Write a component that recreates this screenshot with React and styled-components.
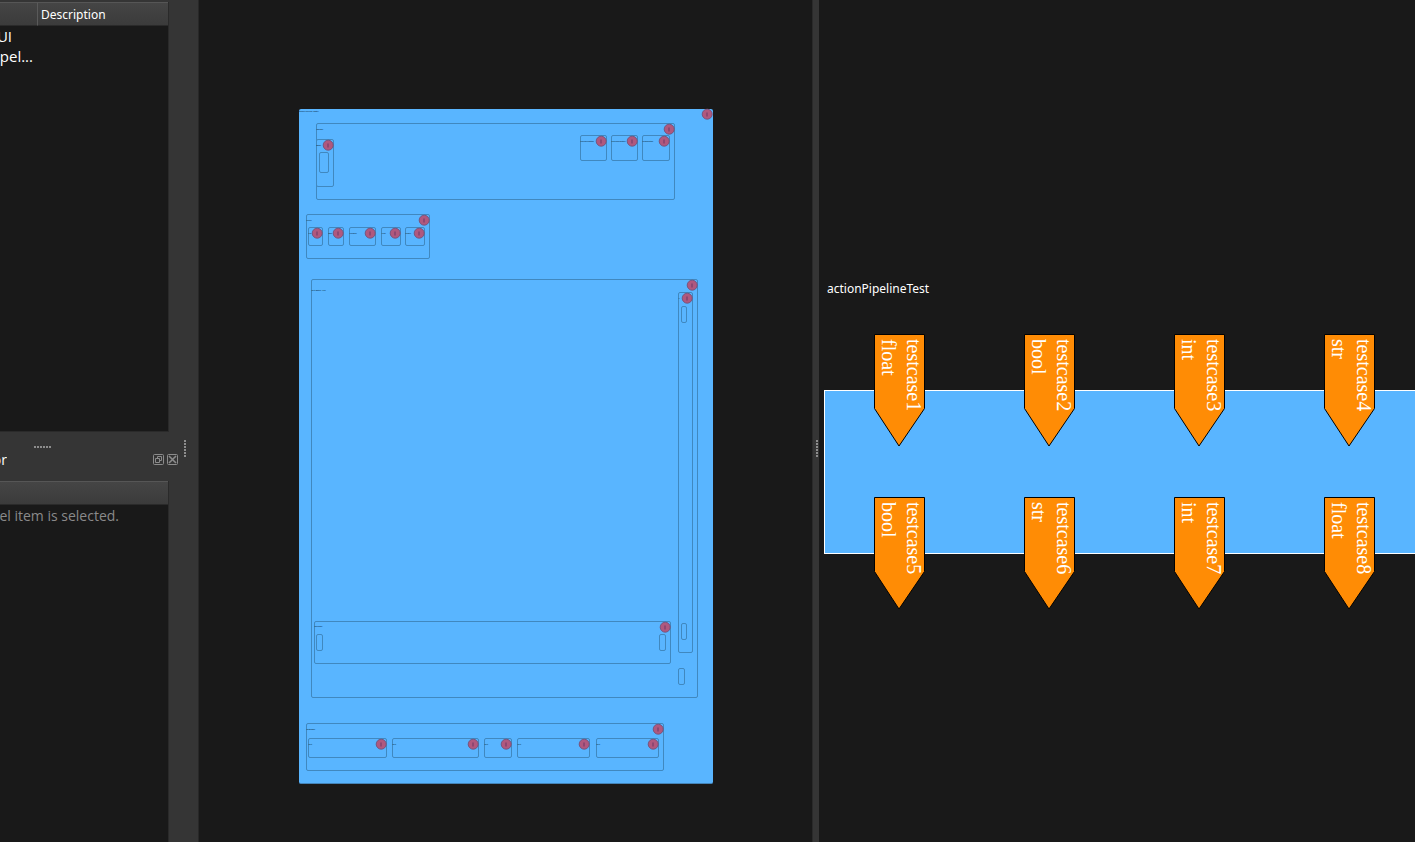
import React from "react";
import styled, { createGlobalStyle } from "styled-components";

const GlobalStyle = createGlobalStyle`
  *, *::before, *::after { box-sizing: border-box; }
  body {
    margin: 0;
    background: #191919;
    color: #fff;
    font-family: "Noto Sans", "Open Sans", sans-serif;
    font-size: 12px;
  }
`;

const Window = styled.div`
  display: grid;
  grid-template-columns: 182px 17px minmax(0, 613fr) 7px minmax(0, 596fr);
  height: 100vh;
  overflow: hidden;
`;

const Dock = styled.aside`
  display: flex;
  flex-direction: column;
  background: #353535;
`;

const DockPanel = styled.section`
  flex: ${(p) => p.$grow} 1 0;
  min-height: 0;
  display: flex;
  flex-direction: column;
  padding-top: ${(p) => p.$top || 0}px;
`;

const TreeArea = styled.div`
  flex: 1;
  margin-right: 13px;
  overflow: hidden;
  background: #191919;
  border-right: 1px solid #2a2a2a;
  border-bottom: ${(p) => (p.$closed ? "1px solid #2a2a2a" : "none")};
`;

const Tree = styled.table`
  width: 100%;
  table-layout: fixed;
  border-collapse: separate;
  border-spacing: 0;
`;

const HeadCell = styled.th`
  width: ${(p) => (p.$width ? `${p.$width}px` : "auto")};
  height: 24px;
  padding: 1px 3px 0;
  text-align: left;
  font-weight: 400;
  line-height: 20px;
  border-top: 1px solid #565656;
  border-bottom: 1px solid #2a2a2a;
  border-right: ${(p) => (p.$divided ? "1px solid #5a5a5a" : "none")};
  background: linear-gradient(#454545, #3b3b3b);
`;

const Cell = styled.td`
  height: 20px;
  padding: 0;
  line-height: 20px;
  color: ${(p) => (p.$muted ? "#8a8a8a" : "#fff")};
`;

const Clipped = styled.div`
  display: flex;
  justify-content: flex-end;
  width: ${(p) => p.$width}px;
  overflow: hidden;
  white-space: nowrap;
  font-family: "Open Sans", "Noto Sans", sans-serif;
  font-size: ${(p) => p.$size || 15}px;
  line-height: ${(p) => p.$line || 20}px;
`;

const GripRow = styled.div`
  display: flex;
  height: 16px;
  align-items: flex-end;
  padding-left: 34px;
`;

const Grip = styled.div`
  display: flex;
  flex-direction: ${(p) => (p.$vertical ? "column" : "row")};
  gap: 1px;
`;

const GripDot = styled.span`
  width: 2px;
  height: 2px;
  background: #8d8d8d;
`;

const TitleBar = styled.header`
  display: flex;
  justify-content: space-between;
  align-items: center;
  height: 24px;
  margin-bottom: 9px;
  padding-right: 3px;
`;

const TitleButtons = styled.div`
  display: flex;
  gap: 2px;
`;

const IconButton = styled.button`
  display: flex;
  width: 12px;
  height: 12px;
  padding: 0;
  border: 0;
  background: none;
`;

const Splitter = styled.div`
  display: flex;
  align-items: center;
  padding: 55px 0 0 ${(p) => p.$inset}px;
  background: #353535;
  border-left: ${(p) => (p.$edge === "left" ? "1px solid #2a2a2a" : "none")};
  border-right: ${(p) => (p.$edge === "left" ? "none" : "1px solid #282828")};
`;

const ModelView = styled.main`
  display: flex;
  align-items: center;
  justify-content: center;
  padding-top: 50px;
  overflow: hidden;
`;

const Model = styled.div`
  position: relative;
  flex: none;
  width: 414px;
  height: 675px;
  background: #59b5ff;
  border-bottom: 1px solid #4484b8;
  border-radius: 2px;
`;

const Node = styled.div`
  position: absolute;
  left: ${(p) => p.$box[0] - 299}px;
  top: ${(p) => p.$box[1] - 109}px;
  width: ${(p) => p.$box[2] - p.$box[0]}px;
  height: ${(p) => p.$box[3] - p.$box[1]}px;
  border: 1px solid #4088bf;
  border-radius: 2px;
`;

const NodeLabel = styled.span`
  position: absolute;
  left: 0;
  top: ${(p) => p.$top}px;
  font-family: "Liberation Sans", sans-serif;
  font-size: 2px;
  line-height: 3px;
  white-space: nowrap;
  color: #001428;
`;

const BadgeIcon = styled.svg`
  position: absolute;
  top: 0;
  right: ${(p) => p.$inset}px;
  width: 11px;
  height: 11px;
  overflow: visible;
`;

const PipelineView = styled.section`
  display: flex;
  flex-direction: column;
  justify-content: center;
  padding: 0 0 9px 5px;
  overflow: hidden;
`;

const PipelineTitle = styled.h1`
  margin: 0 0 92px 3px;
  padding-top: 1px;
  font-size: 12px;
  line-height: 18px;
  font-weight: 400;
`;

const Pipeline = styled.div`
  position: relative;
  height: 164px;
  background: #59b5ff;
  border: 1px solid #fff;
  border-right: 0;
`;

const PortRow = styled.div`
  position: absolute;
  left: 49px;
  top: ${(p) => p.$top}px;
  display: flex;
  gap: 99px;
`;

const Port = styled.div`
  position: relative;
  flex: none;
  width: 51px;
  height: 113px;
`;

const PortShape = styled.svg`
  display: block;
`;

const PortText = styled.div`
  position: absolute;
  top: 5px;
  right: -1px;
  writing-mode: vertical-rl;
  font-family: "Liberation Serif", serif;
  font-size: 20px;
  line-height: 25px;
  white-space: nowrap;
`;

const groups = [
  { box: [316, 123, 675, 200], label: "Toolbar", badge: true },
  { box: [316, 139, 334, 187], label: "Base", badge: true },
  { box: [319, 152, 329, 173] },
  { box: [580, 135, 607, 161], label: "Minimizebutton", badge: true },
  { box: [611, 135, 638, 161], label: "Maximizebutton", badge: true },
  { box: [642, 135, 670, 161], label: "Closebutton", badge: true },
  { box: [306, 214, 430, 259], label: "Menu", badge: true },
  { box: [308, 227, 323, 246], label: "File", badge: true },
  { box: [328, 227, 344, 246], label: "Edit", badge: true },
  { box: [349, 227, 376, 246], label: "Window", badge: true },
  { box: [381, 227, 401, 246], label: "View", badge: true },
  { box: [405, 227, 425, 246], label: "Model", badge: true },
  { box: [311, 279, 698, 698], label: "Text Editor Area", top: 9, badge: true },
  { box: [678, 292, 693, 653], label: "V", badge: true },
  { box: [681, 306, 687, 323] },
  { box: [681, 623, 687, 640] },
  { box: [678, 668, 685, 685] },
  { box: [314, 621, 671, 664], label: "Scrollbar", top: 3, badge: true },
  { box: [316, 634, 323, 651] },
  { box: [659, 634, 666, 651] },
  { box: [306, 723, 664, 771], label: "Statusbar", badge: true },
  { box: [308, 738, 387, 758], label: "Text", badge: true },
  { box: [392, 738, 479, 758], label: "Text", badge: true },
  { box: [484, 738, 512, 758], label: "Text", badge: true },
  { box: [517, 738, 590, 758], label: "Text", badge: true },
  { box: [596, 738, 659, 758], label: "Text", badge: true },
];

const inputs = [
  ["testcase1", "float"],
  ["testcase2", "bool"],
  ["testcase3", "int"],
  ["testcase4", "str"],
];

const outputs = [
  ["testcase5", "bool"],
  ["testcase6", "str"],
  ["testcase7", "int"],
  ["testcase8", "float"],
];

function GripDots({ vertical }) {
  return (
    <Grip $vertical={vertical}>
      {[0, 1, 2, 3, 4, 5].map((i) => (
        <GripDot key={i} />
      ))}
    </Grip>
  );
}

function Badge({ inset = 0 }) {
  return (
    <BadgeIcon $inset={inset} viewBox="0 0 11 11" aria-hidden="true">
      <circle cx="5.2" cy="5.2" r="5" fill="#b0587e" stroke="#735078" strokeWidth="0.9" />
      <path d="M4.5 3.5v4M5.5 3.5v4" stroke="#8a4570" strokeWidth="0.9" />
    </BadgeIcon>
  );
}

function Ports({ items, top }) {
  return (
    <PortRow $top={top}>
      {items.map(([name, type]) => (
        <Port key={name}>
          <PortShape width="51" height="113" viewBox="0 0 51 113" aria-hidden="true">
            <path d="M.5 .5H50.5V74.5L25 112L.5 74.5Z" fill="#ff8c05" stroke="#000" />
          </PortShape>
          <PortText>
            <div>{name}</div>
            <div>{type}</div>
          </PortText>
        </Port>
      ))}
    </PortRow>
  );
}

function FloatIcon() {
  return (
    <svg width="12" height="12" viewBox="0 0 12 12" fill="none" stroke="#8c8c8c" aria-hidden="true">
      <rect x=".5" y=".5" width="10" height="10" rx="1" />
      <path d="M4.5 4.5V2.5H8.5V6.5H6.5M2.5 4.5H6.5V8.5H2.5Z" />
    </svg>
  );
}

function CloseIcon() {
  return (
    <svg width="12" height="12" viewBox="0 0 12 12" fill="none" stroke="#8c8c8c" aria-hidden="true">
      <rect x=".5" y=".5" width="10" height="10" rx="1" />
      <path d="M2 2L9 9M9 2L2 9" strokeWidth="1.6" />
    </svg>
  );
}

export default function App() {
  return (
    <>
      <GlobalStyle />
      <Window>
        <Dock>
          <DockPanel $grow={430} $top={2}>
            <TreeArea $closed>
              <Tree>
                <thead>
                  <tr>
                    <HeadCell $width={38} $divided />
                    <HeadCell>Description</HeadCell>
                  </tr>
                </thead>
                <tbody>
                  <tr>
                    <Cell colSpan={2}>
                      <Clipped $width={12}>UI</Clipped>
                    </Cell>
                  </tr>
                  <tr>
                    <Cell colSpan={2}>
                      <Clipped $width={33}>pel...</Clipped>
                    </Cell>
                  </tr>
                </tbody>
              </Tree>
            </TreeArea>
          </DockPanel>
          <DockPanel $grow={410}>
            <GripRow>
              <GripDots />
            </GripRow>
            <TitleBar>
              <Clipped $width={7} $size={14} $line={24}>or</Clipped>
              <TitleButtons>
                <IconButton aria-label="Float">
                  <FloatIcon />
                </IconButton>
                <IconButton aria-label="Close">
                  <CloseIcon />
                </IconButton>
              </TitleButtons>
            </TitleBar>
            <TreeArea>
              <Tree>
                <thead>
                  <tr>
                    <HeadCell />
                  </tr>
                </thead>
                <tbody>
                  <tr>
                    <Cell $muted>
                      <Clipped $width={119} $size={14} $line={22}>el item is selected.</Clipped>
                    </Cell>
                  </tr>
                </tbody>
              </Tree>
            </TreeArea>
          </DockPanel>
        </Dock>
        <Splitter $inset={2}>
          <GripDots vertical />
        </Splitter>
        <ModelView>
          <Model>
            <NodeLabel $top={1}>Drawer Pipeline Tester</NodeLabel>
            <Badge />
            {groups.map((g) => (
              <Node key={g.box.join()} $box={g.box}>
                {g.label && <NodeLabel $top={g.top || 4}>{g.label}</NodeLabel>}
                {g.badge && <Badge inset={-1} />}
              </Node>
            ))}
          </Model>
        </ModelView>
        <Splitter $inset={3} $edge="left">
          <GripDots vertical />
        </Splitter>
        <PipelineView>
          <PipelineTitle>actionPipelineTest</PipelineTitle>
          <Pipeline>
            <Ports items={inputs} top={-57} />
            <Ports items={outputs} top={106} />
          </Pipeline>
        </PipelineView>
      </Window>
    </>
  );
}
